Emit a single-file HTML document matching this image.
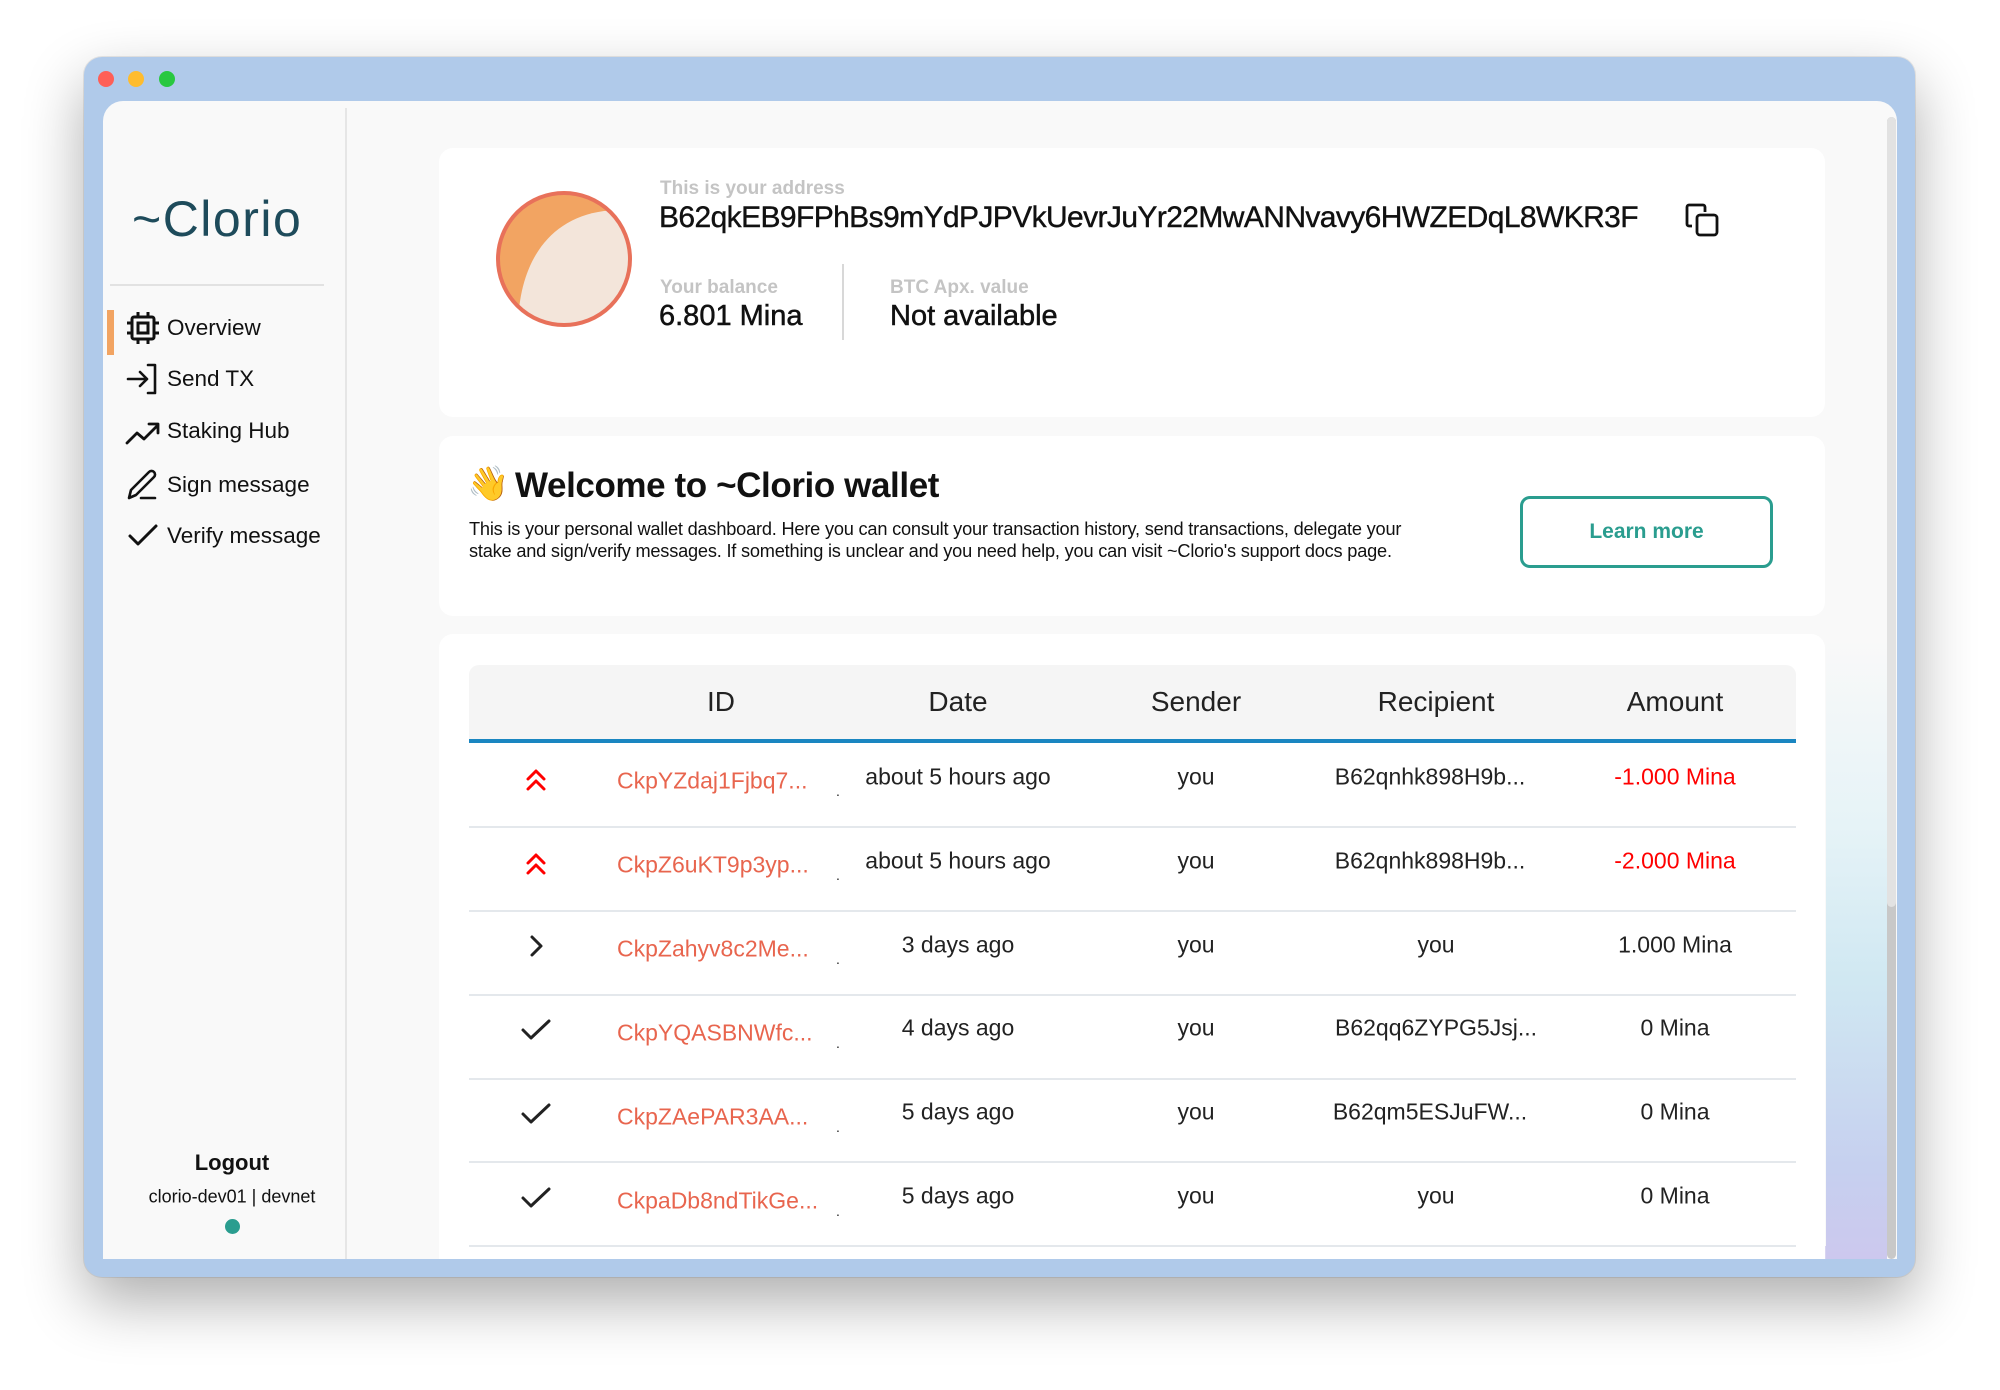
<!DOCTYPE html>
<html><head><meta charset="utf-8">
<style>
*{margin:0;padding:0;box-sizing:border-box}
body{width:2000px;height:1390px;background:#fff;font-family:"Liberation Sans",sans-serif;color:#111;position:relative;overflow:hidden}
.abs{position:absolute}
.win{left:84px;top:57px;width:1831px;height:1220px;background:#b0caea;border-radius:18px;box-shadow:0 25px 60px rgba(0,0,0,.32),0 0 0 1px rgba(0,0,0,.08)}
.dot{width:16px;height:16px;border-radius:50%;top:71px}
.inner{left:103px;top:101px;width:1794px;height:1158px;background:#f9f9f9;border-radius:20px 20px 0 0;overflow:hidden}
.card{background:#fff;border-radius:14px}
.nav{left:167px;font-size:22.5px;color:#111;transform:translateY(-50%)}
.nicon{left:125px;transform:translateY(-50%)}
.lbl{font-size:19px;font-weight:bold;color:#c4c4c4}
.th{font-size:28px;color:#222;transform:translate(-50%,-50%);white-space:nowrap}
.td{font-size:23px;color:#222;transform:translate(-50%,-50%);white-space:nowrap}
.id{font-size:23px;color:#e8654e;transform:translateY(-50%);white-space:nowrap;left:617px}
.sep{left:469px;width:1327px;height:2px;background:#e4e8ec}
.ic{transform:translate(-50%,-50%)}
</style></head><body>
<div class="abs win"></div>
<div class="abs dot" style="left:98px;background:#fe5f57"></div>
<div class="abs dot" style="left:128px;background:#febc2e"></div>
<div class="abs dot" style="left:159px;background:#28c840"></div>
<div class="abs inner"></div>
<div class="abs" style="left:1826px;top:640px;width:61px;height:619px;background:linear-gradient(180deg,rgba(249,249,249,1) 0%,#e6f3f7 30%,#d0e8f2 55%,#c6d0ef 85%,#ccc8ee 100%)"></div>
<div class="abs" style="left:439px;top:1246px;width:1387px;height:13px;background:linear-gradient(90deg,#eef0f6,#d8d4f0)"></div>
<div class="abs" style="left:1887px;top:117px;width:9px;height:1142px;background:#c8c8c8;border-radius:5px"></div>
<div class="abs" style="left:1887px;top:117px;width:9px;height:790px;background:#e2e2e2;border-radius:5px"></div>

<div class="abs" style="left:345px;top:108px;width:2px;height:1151px;background:#e6e6e6"></div>
<div class="abs" style="left:132px;top:190px;font-size:50px;color:#1e4b5b;letter-spacing:1.5px">~Clorio</div>
<div class="abs" style="left:110px;top:284px;width:214px;height:2px;background:#e2e2e2"></div>
<div class="abs" style="left:107px;top:310px;width:7px;height:45px;background:#f2a462"></div>

<svg class="abs nicon" style="top:328px" width="36" height="36" viewBox="0 0 36 36" fill="none" stroke="#111" stroke-width="3"><rect x="7" y="7" width="22" height="22" rx="2"/><rect x="13" y="13" width="10" height="10"/><path d="M13 2v5M23 2v5M13 29v5M23 29v5M2 13h5M2 23h5M29 13h5M29 23h5"/></svg>
<div class="abs nav" style="top:328px">Overview</div>
<svg class="abs nicon" style="top:379px" width="36" height="36" viewBox="0 0 36 36" fill="none" stroke="#111" stroke-width="2.6" stroke-linecap="round" stroke-linejoin="round"><path d="M3 18h19M15 11l7 7-7 7M23 4h7v28h-7"/></svg>
<div class="abs nav" style="top:379px">Send TX</div>
<svg class="abs nicon" style="top:433px" width="36" height="36" viewBox="0 0 36 36" fill="none" stroke="#111" stroke-width="2.8" stroke-linecap="round" stroke-linejoin="round"><path d="M2 28l10-10 7 6 14-14M24 9h9v9"/></svg>
<div class="abs nav" style="top:431px">Staking Hub</div>
<svg class="abs nicon" style="top:485px" width="36" height="36" viewBox="0 0 36 36" fill="none" stroke="#111" stroke-width="2.6" stroke-linecap="round" stroke-linejoin="round"><path d="M4 31l2-8L24 5a3 3 0 0 1 5 5L11 28zM16 31h14"/></svg>
<div class="abs nav" style="top:485px">Sign message</div>
<svg class="abs nicon" style="top:536px" width="36" height="36" viewBox="0 0 36 36" fill="none" stroke="#111" stroke-width="3" stroke-linecap="round" stroke-linejoin="round"><path d="M5 18l8 8L31 8"/></svg>
<div class="abs nav" style="top:536px">Verify message</div>

<div class="abs" style="left:232px;top:1163px;transform:translate(-50%,-50%);font-size:22px;font-weight:bold">Logout</div>
<div class="abs" style="left:232px;top:1197px;transform:translate(-50%,-50%);font-size:18px;white-space:nowrap">clorio-dev01 | devnet</div>
<div class="abs" style="left:225px;top:1219px;width:15px;height:15px;border-radius:50%;background:#2a9d8f"></div>

<div class="abs card" style="left:439px;top:148px;width:1386px;height:269px"></div>
<svg class="abs" style="left:494px;top:189px" width="140" height="140" viewBox="0 0 140 140"><defs><clipPath id="c"><circle cx="70" cy="70" r="66"/></clipPath></defs><circle cx="70" cy="70" r="66" fill="#f2a462"/><g clip-path="url(#c)"><path d="M24 140 C24 80 50 30 110 22 C125 20 140 30 140 30 L140 140 Z" fill="#f3e5da"/></g><circle cx="70" cy="70" r="66" fill="none" stroke="#e8715a" stroke-width="4"/></svg>
<div class="abs lbl" style="left:660px;top:178px">This is your address</div>
<div class="abs" style="left:659px;top:201px;font-size:30px;letter-spacing:-0.6px;-webkit-text-stroke:0.4px #111">B62qkEB9FPhBs9mYdPJPVkUevrJuYr22MwANNvavy6HWZEDqL8WKR3F</div>
<svg class="abs" style="left:1684px;top:202px" width="36" height="36" viewBox="0 0 36 36" fill="none" stroke="#111" stroke-width="2.8" stroke-linejoin="round"><path d="M8 24H5a2 2 0 0 1-2-2V5a2 2 0 0 1 2-2h14a2 2 0 0 1 2 2v5"/><rect x="13" y="13" width="20" height="20" rx="3"/></svg>
<div class="abs lbl" style="left:660px;top:277px">Your balance</div>
<div class="abs" style="left:659px;top:300px;font-size:29px;-webkit-text-stroke:0.5px #111">6.801 Mina</div>
<div class="abs" style="left:842px;top:264px;width:2px;height:76px;background:#d8d8d8"></div>
<div class="abs lbl" style="left:890px;top:277px">BTC Apx. value</div>
<div class="abs" style="left:890px;top:300px;font-size:29px;-webkit-text-stroke:0.5px #111">Not available</div>

<div class="abs card" style="left:439px;top:436px;width:1386px;height:180px"></div>
<div class="abs" style="left:467px;top:464px;font-size:34px;font-family:'Noto Color Emoji','Liberation Sans',sans-serif">👋</div>
<div class="abs" style="left:515px;top:466px;font-size:35px;font-weight:bold;letter-spacing:-0.4px">Welcome to ~Clorio wallet</div>
<div class="abs" style="left:469px;top:518px;font-size:18.2px;line-height:22px;color:#111;white-space:nowrap;letter-spacing:-0.2px">This is your personal wallet dashboard. Here you can consult your transaction history, send transactions, delegate your<br>stake and sign/verify messages. If something is unclear and you need help, you can visit ~Clorio's support docs page.</div>
<div class="abs" style="left:1520px;top:496px;width:253px;height:72px;border:3px solid #2a9d8f;border-radius:10px;color:#2a9d8f;font-weight:bold;font-size:21px;display:flex;align-items:center;justify-content:center">Learn more</div>

<div class="abs card" style="left:439px;top:634px;width:1386px;height:640px;border-radius:14px 14px 0 0"></div>
<div class="abs" style="left:469px;top:665px;width:1327px;height:75px;background:#f5f5f5;border-radius:10px 10px 0 0"></div>
<div class="abs" style="left:469px;top:739px;width:1327px;height:4px;background:#1a86c1"></div>
<div class="abs th" style="left:721px;top:702px">ID</div>
<div class="abs th" style="left:958px;top:702px">Date</div>
<div class="abs th" style="left:1196px;top:702px">Sender</div>
<div class="abs th" style="left:1436px;top:702px">Recipient</div>
<div class="abs th" style="left:1675px;top:702px">Amount</div>

<div class="abs sep" style="top:826px"></div>
<div class="abs sep" style="top:910px"></div>
<div class="abs sep" style="top:994px"></div>
<div class="abs sep" style="top:1078px"></div>
<div class="abs sep" style="top:1161px"></div>
<div class="abs sep" style="top:1245px"></div>

<svg class="abs ic" style="left:536px;top:780px" width="24" height="26" viewBox="0 0 24 26" fill="none" stroke="#f00" stroke-width="3" stroke-linecap="round" stroke-linejoin="round"><path d="M4 12l8-8 8 8M4 22l8-8 8 8"/></svg>
<div class="abs id" style="top:781px">CkpYZdaj1Fjbq7...</div>
<div class="abs td" style="left:838px;top:791px;font-size:14px">.</div>
<div class="abs td" style="left:958px;top:777px">about 5 hours ago</div>
<div class="abs td" style="left:1196px;top:777px">you</div>
<div class="abs td" style="left:1430px;top:777px">B62qnhk898H9b...</div>
<div class="abs td" style="left:1675px;top:777px;color:#f00">-1.000 Mina</div>
<svg class="abs ic" style="left:536px;top:864px" width="24" height="26" viewBox="0 0 24 26" fill="none" stroke="#f00" stroke-width="3" stroke-linecap="round" stroke-linejoin="round"><path d="M4 12l8-8 8 8M4 22l8-8 8 8"/></svg>
<div class="abs id" style="top:865px">CkpZ6uKT9p3yp...</div>
<div class="abs td" style="left:838px;top:875px;font-size:14px">.</div>
<div class="abs td" style="left:958px;top:861px">about 5 hours ago</div>
<div class="abs td" style="left:1196px;top:861px">you</div>
<div class="abs td" style="left:1430px;top:861px">B62qnhk898H9b...</div>
<div class="abs td" style="left:1675px;top:861px;color:#f00">-2.000 Mina</div>
<svg class="abs ic" style="left:536px;top:946px" width="20" height="28" viewBox="0 0 20 28" fill="none" stroke="#222" stroke-width="3" stroke-linecap="round" stroke-linejoin="round"><path d="M6 5l9 9-9 9"/></svg>
<div class="abs id" style="top:949px">CkpZahyv8c2Me...</div>
<div class="abs td" style="left:838px;top:959px;font-size:14px">.</div>
<div class="abs td" style="left:958px;top:945px">3 days ago</div>
<div class="abs td" style="left:1196px;top:945px">you</div>
<div class="abs td" style="left:1436px;top:945px">you</div>
<div class="abs td" style="left:1675px;top:945px">1.000 Mina</div>
<svg class="abs ic" style="left:536px;top:1030px" width="32" height="26" viewBox="0 0 32 26" fill="none" stroke="#222" stroke-width="3" stroke-linecap="round" stroke-linejoin="round"><path d="M3 13l8 8L29 4"/></svg>
<div class="abs id" style="top:1033px">CkpYQASBNWfc...</div>
<div class="abs td" style="left:838px;top:1043px;font-size:14px">.</div>
<div class="abs td" style="left:958px;top:1028px">4 days ago</div>
<div class="abs td" style="left:1196px;top:1028px">you</div>
<div class="abs td" style="left:1436px;top:1028px">B62qq6ZYPG5Jsj...</div>
<div class="abs td" style="left:1675px;top:1028px">0 Mina</div>
<svg class="abs ic" style="left:536px;top:1114px" width="32" height="26" viewBox="0 0 32 26" fill="none" stroke="#222" stroke-width="3" stroke-linecap="round" stroke-linejoin="round"><path d="M3 13l8 8L29 4"/></svg>
<div class="abs id" style="top:1117px">CkpZAePAR3AA...</div>
<div class="abs td" style="left:838px;top:1127px;font-size:14px">.</div>
<div class="abs td" style="left:958px;top:1112px">5 days ago</div>
<div class="abs td" style="left:1196px;top:1112px">you</div>
<div class="abs td" style="left:1430px;top:1112px">B62qm5ESJuFW...</div>
<div class="abs td" style="left:1675px;top:1112px">0 Mina</div>
<svg class="abs ic" style="left:536px;top:1198px" width="32" height="26" viewBox="0 0 32 26" fill="none" stroke="#222" stroke-width="3" stroke-linecap="round" stroke-linejoin="round"><path d="M3 13l8 8L29 4"/></svg>
<div class="abs id" style="top:1201px">CkpaDb8ndTikGe...</div>
<div class="abs td" style="left:838px;top:1211px;font-size:14px">.</div>
<div class="abs td" style="left:958px;top:1196px">5 days ago</div>
<div class="abs td" style="left:1196px;top:1196px">you</div>
<div class="abs td" style="left:1436px;top:1196px">you</div>
<div class="abs td" style="left:1675px;top:1196px">0 Mina</div>

<div class="abs" style="left:103px;top:1259px;width:1794px;height:18px;background:#b0caea"></div>
</body></html>
